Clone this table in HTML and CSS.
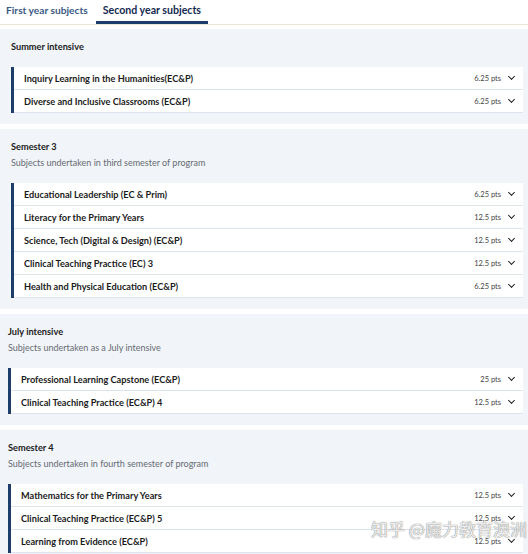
FILE: index.html
```html
<!DOCTYPE html>
<html lang="en">
<head>
    <meta charset="UTF-8">
    <meta name="viewport" content="width=device-width, initial-scale=1.0">
    <title>Course structure</title>
    <link rel="stylesheet" href="styles.css">
</head>
<body>
    <nav class="tabs">
        <a class="tab" href="#first">First year subjects</a>
        <a class="tab active" href="#second">Second year subjects</a>
    </nav>

    <section class="block">
        <h3 class="block-title">Summer intensive</h3>
        <ul class="subjects">
            <li class="subject"><span class="name">Inquiry Learning in the Humanities(EC&amp;P)</span><span class="pts">6.25 pts</span><span class="chev"></span></li>
            <li class="subject"><span class="name">Diverse and Inclusive Classrooms (EC&amp;P)</span><span class="pts">6.25 pts</span><span class="chev"></span></li>
        </ul>
    </section>

    <section class="block">
        <h3 class="block-title">Semester 3</h3>
        <p class="block-sub">Subjects undertaken in third semester of program</p>
        <ul class="subjects">
            <li class="subject"><span class="name">Educational Leadership (EC &amp; Prim)</span><span class="pts">6.25 pts</span><span class="chev"></span></li>
            <li class="subject"><span class="name">Literacy for the Primary Years</span><span class="pts">12.5 pts</span><span class="chev"></span></li>
            <li class="subject"><span class="name">Science, Tech (Digital &amp; Design) (EC&amp;P)</span><span class="pts">12.5 pts</span><span class="chev"></span></li>
            <li class="subject"><span class="name">Clinical Teaching Practice (EC) 3</span><span class="pts">12.5 pts</span><span class="chev"></span></li>
            <li class="subject"><span class="name">Health and Physical Education (EC&amp;P)</span><span class="pts">6.25 pts</span><span class="chev"></span></li>
        </ul>
    </section>

    <section class="block shifted">
        <h3 class="block-title">July intensive</h3>
        <p class="block-sub">Subjects undertaken as a July intensive</p>
        <ul class="subjects">
            <li class="subject"><span class="name">Professional Learning Capstone (EC&amp;P)</span><span class="pts">25 pts</span><span class="chev"></span></li>
            <li class="subject"><span class="name">Clinical Teaching Practice (EC&amp;P) 4</span><span class="pts">12.5 pts</span><span class="chev"></span></li>
        </ul>
    </section>

    <section class="block shifted">
        <h3 class="block-title">Semester 4</h3>
        <p class="block-sub">Subjects undertaken in fourth semester of program</p>
        <ul class="subjects">
            <li class="subject"><span class="name">Mathematics for the Primary Years</span><span class="pts">12.5 pts</span><span class="chev"></span></li>
            <li class="subject"><span class="name">Clinical Teaching Practice (EC&amp;P) 5</span><span class="pts">12.5 pts</span><span class="chev"></span></li>
            <li class="subject"><span class="name">Learning from Evidence (EC&amp;P)</span><span class="pts">12.5 pts</span><span class="chev"></span></li>
        </ul>
    </section>

    <div class="watermark">知乎 @魔力教育澳洲</div>
</body>
</html>
```

FILE: styles.css
```css
:root {
    --navy: #1d3d6b;
    --ink: #1b1b1b;
    --muted: #666b73;
    --panel: #f1f4f8;
    --line: #dde4ed;
}
body {
    margin: 0;
    font-family: Lato, "Noto Sans", sans-serif;
    color: var(--ink);
    background: #fff;
    height: 554px;
    overflow: hidden;
    position: relative;
}
.tabs {
    display: flex;
    gap: 2px;
    height: 24px;
    border-bottom: 1px solid #ece5d6;
    margin-bottom: 4px;
}
.tab {
    display: block;
    padding: 0 6px;
    font-size: 10.2px;
    font-weight: 700;
    line-height: 21px;
    color: #3a5a85;
    text-decoration: none;
    border-bottom: 3px solid transparent;
}
.tab.active {
    padding: 0 7px;
    font-size: 10.6px;
    color: #142a4f;
    border-bottom-color: var(--navy);
}
.block {
    background: var(--panel);
    padding: 11px 5px 11px 11px;
    margin-bottom: 5px;
}
.block.shifted {
    padding-left: 8px;
}
.block-title {
    margin: 0;
    font-size: 9.2px;
    font-weight: 700;
    line-height: 14px;
}
.block-sub {
    margin: 2px 0 0;
    font-size: 9px;
    line-height: 14px;
    color: var(--muted);
}
.subjects {
    list-style: none;
    margin: 13px 0 0;
    padding: 0;
    border-left: 3px solid var(--navy);
    background: #fff;
}
.subject {
    display: flex;
    align-items: center;
    height: 22px;
    padding: 0 6px 0 10px;
    border-bottom: 1px solid var(--line);
}
.name {
    flex: 1;
    font-size: 9.2px;
    font-weight: 700;
}
.pts {
    font-size: 7.5px;
    color: #444;
}
.chev {
    width: 4px;
    height: 4px;
    margin: 0 3px 3px 8px;
    border-right: 1.6px solid #222;
    border-bottom: 1.6px solid #222;
    transform: rotate(45deg);
}
.watermark {
    position: absolute;
    left: 371px;
    top: 516px;
    font-family: "Noto Sans CJK SC", sans-serif;
    font-size: 17px;
    line-height: 26px;
    white-space: nowrap;
    color: rgba(255, 255, 255, 0.85);
    text-shadow: 0 0 1px #8a8a8a, 0 0 1px #8a8a8a;
}
```
